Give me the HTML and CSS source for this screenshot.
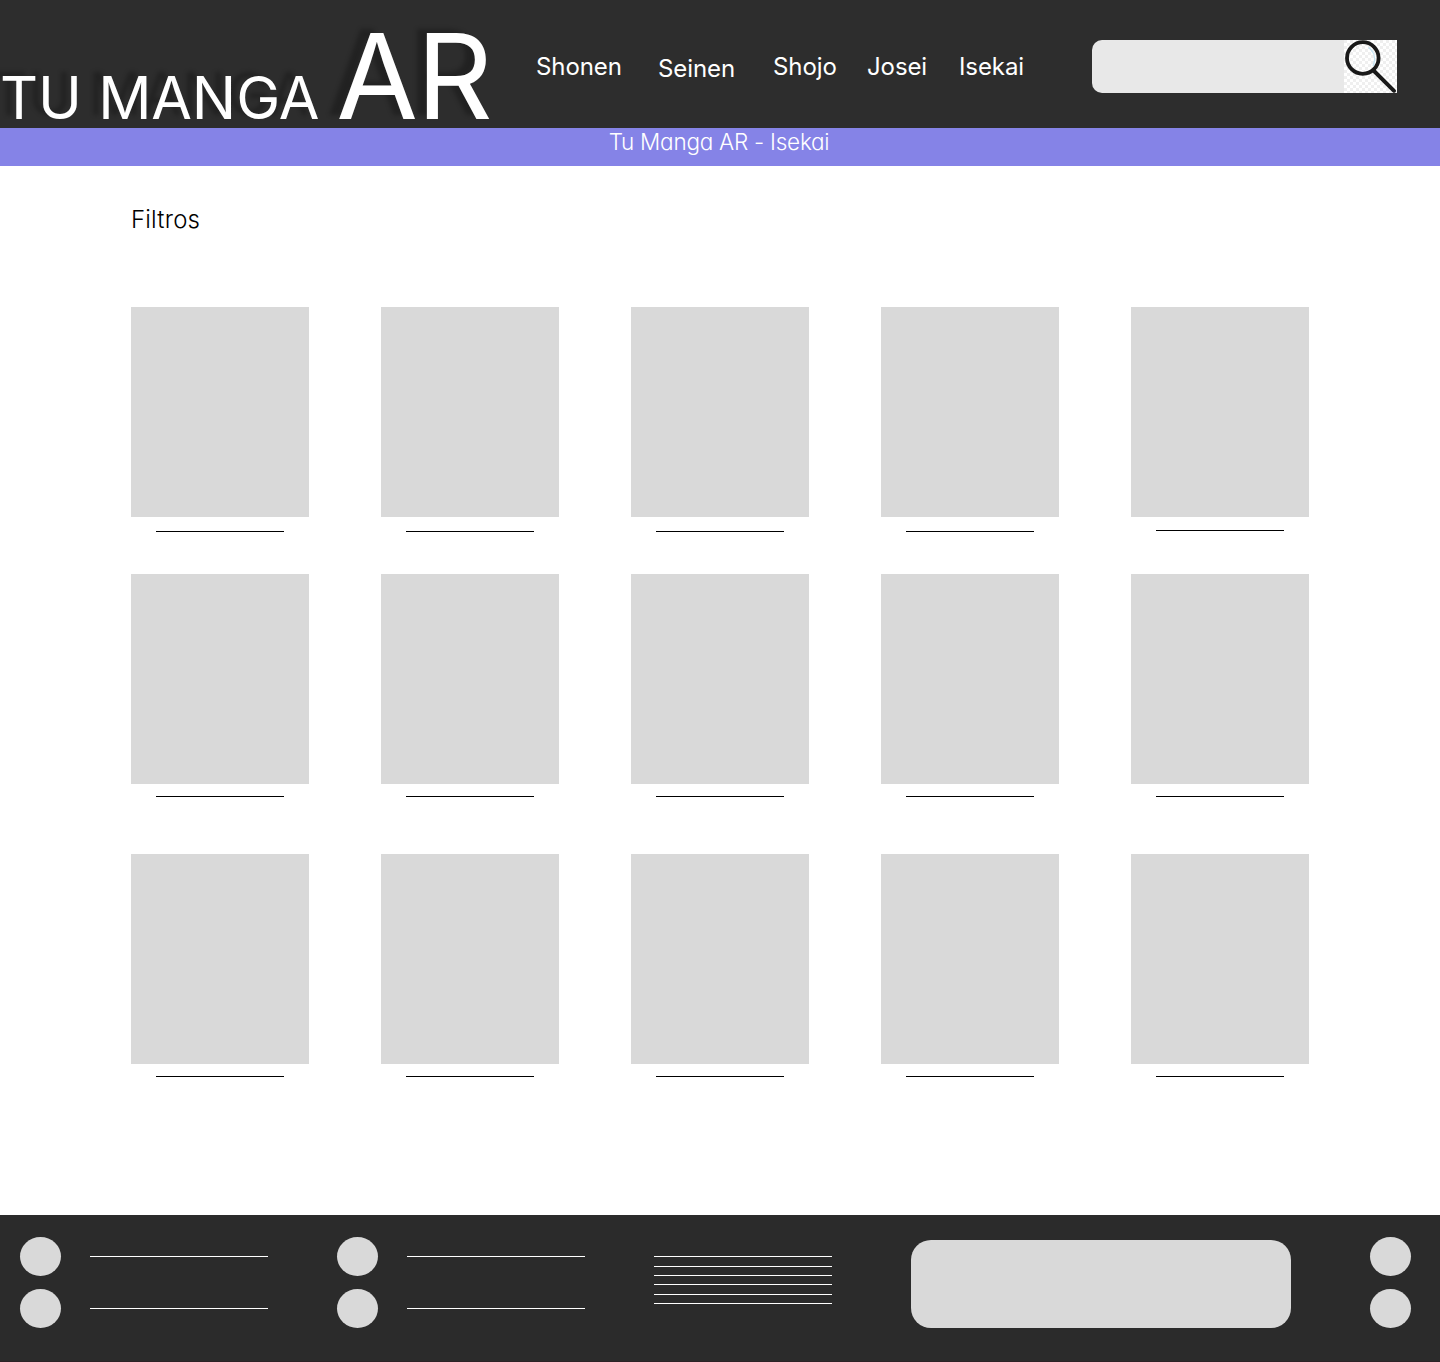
FILE: index.html
```html
<!DOCTYPE html>
<html lang="es">
<head>
<meta charset="utf-8">
<title>Tu Manga AR - Isekai</title>
<link rel="stylesheet" href="styles.css">
</head>
<body>
<header class="header">
  <h1 class="logo"><span class="logo-small">TU MANGA</span><span class="logo-big">AR</span></h1>
  <nav class="nav">
    <a>Shonen</a>
    <a class="nav-low">Seinen</a>
    <a>Shojo</a>
    <a>Josei</a>
    <a>Isekai</a>
  </nav>
  <div class="search">
    <svg class="search-icon" viewBox="0 0 53 53" fill="none">
      <defs>
        <pattern id="checks" width="6" height="6" patternUnits="userSpaceOnUse">
          <path d="M0 0h3v3H0zM3 3h3v3H3z" fill="#efefef"/>
        </pattern>
      </defs>
      <path d="M0 0h53v53H0z" fill="#fff"/>
      <path d="M0 0h53v53H0z" fill="url(#checks)"/>
      <path d="M24.5 7.5C30.5 12 32 19 29 26" stroke="#c3e4f4" stroke-width="1.3"/>
      <circle cx="18.8" cy="18" r="15.8" stroke="#191919" stroke-width="3.8"/>
      <path d="M29.5 30.5 50 50.8" stroke="#191919" stroke-width="3.9" stroke-linecap="round"/>
    </svg>
  </div>
</header>
<div class="banner"><span>Tu Manga AR - Isekai</span></div>
<main class="main">
  <h2 class="filters">Filtros</h2>
  <div class="row row-first">
    <article class="card"><div class="cover"></div><hr></article>
    <article class="card"><div class="cover"></div><hr></article>
    <article class="card"><div class="cover"></div><hr></article>
    <article class="card"><div class="cover"></div><hr></article>
    <article class="card card-raised"><div class="cover"></div><hr></article>
  </div>
  <div class="row row-second">
    <article class="card"><div class="cover"></div><hr></article>
    <article class="card"><div class="cover"></div><hr></article>
    <article class="card"><div class="cover"></div><hr></article>
    <article class="card"><div class="cover"></div><hr></article>
    <article class="card"><div class="cover"></div><hr></article>
  </div>
  <div class="row">
    <article class="card"><div class="cover"></div><hr></article>
    <article class="card"><div class="cover"></div><hr></article>
    <article class="card"><div class="cover"></div><hr></article>
    <article class="card"><div class="cover"></div><hr></article>
    <article class="card"><div class="cover"></div><hr></article>
  </div>
</main>
<footer class="footer">
  <div class="contacts">
    <div class="contact"><i class="dot"></i><hr></div>
    <div class="contact"><i class="dot"></i><hr></div>
  </div>
  <div class="contacts contacts-second">
    <div class="contact"><i class="dot"></i><hr></div>
    <div class="contact"><i class="dot"></i><hr></div>
  </div>
  <div class="lines"><hr><hr><hr><hr><hr><hr></div>
  <div class="panel"></div>
  <div class="social"><i class="dot"></i><i class="dot"></i></div>
</footer>
</body>
</html>
```
FILE: styles.css
```css
* { box-sizing: border-box; }
body {
  margin: 0;
  background: #fff;
  color: #000;
  font-family: Inter, sans-serif;
}
hr { margin: 0; border: 0; height: 1px; background: #000; }

.header {
  display: flex;
  align-items: flex-start;
  height: 128px;
  background: #2d2d2d;
  color: #fff;
}
.logo {
  flex: none;
  width: 536px;
  margin: 0;
  font-size: 118.5px;
  font-weight: 400;
  line-height: 152px;
  white-space: nowrap;
  text-shadow: -10px -4px 4px rgba(0, 0, 0, .25);
}
.logo-small { font-size: 59px; line-height: 1; letter-spacing: -.15px; }
.logo-big { margin-left: 17px; letter-spacing: -1.5px; }
.nav {
  display: grid;
  grid-template-columns: 122px 115px 94px 92px 133px;
  padding-top: 52px;
  font-size: 24px;
  letter-spacing: -.1px;
  line-height: 29px;
}
.nav-low { padding-top: 2px; }
.search {
  display: flex;
  justify-content: flex-end;
  width: 305px;
  height: 53px;
  margin-top: 40px;
  border-radius: 10px 0 0 10px;
  background: #e8e8e8;
}
.search-icon { display: block; width: 53px; height: 53px; }

.banner {
  height: 38px;
  padding-right: 2px;
  background: #8583e7;
  color: #fff;
  font-size: 22.5px;
  font-weight: 350;
  font-feature-settings: "cv11";
  letter-spacing: -.25px;
  line-height: 28px;
  text-align: center;
}

.main { height: 1049px; padding: 39px 131px 0; }
.filters {
  height: 102px;
  margin: 0;
  font-size: 24px;
  font-weight: 300;
  letter-spacing: .2px;
  line-height: 29px;
}
.row { display: flex; justify-content: space-between; }
.row-first { height: 267px; }
.row-second { height: 280px; }
.card { width: 178px; }
.cover { height: 210px; background: #d9d9d9; }
.card hr { width: 128px; margin: 12px 0 0 25px; }
.row-first hr { margin-top: 14px; }
.row-first .card-raised hr { margin-top: 13px; }

.footer {
  display: flex;
  align-items: flex-start;
  height: 147px;
  padding: 22px 29px 0 20px;
  background: #2b2b2b;
  border-bottom: 1px solid #2c2226;
}
.footer hr { width: 178px; background: #fff; }
.dot { display: block; width: 41px; height: 39px; border-radius: 50%; background: #d9d9d9; }
.contacts, .social { display: grid; gap: 13px; }
.contacts-second { margin-left: 69px; }
.contact { display: flex; align-items: center; gap: 29px; }
.lines { display: grid; grid-template-rows: 10px 9px 9px 10px 9px 1px; margin: 19px 0 0 69px; }
.panel { width: 380px; height: 88px; margin: 3px 0 0 79px; border-radius: 20px; background: #d9d9d9; }
.social { margin-left: auto; }
```
